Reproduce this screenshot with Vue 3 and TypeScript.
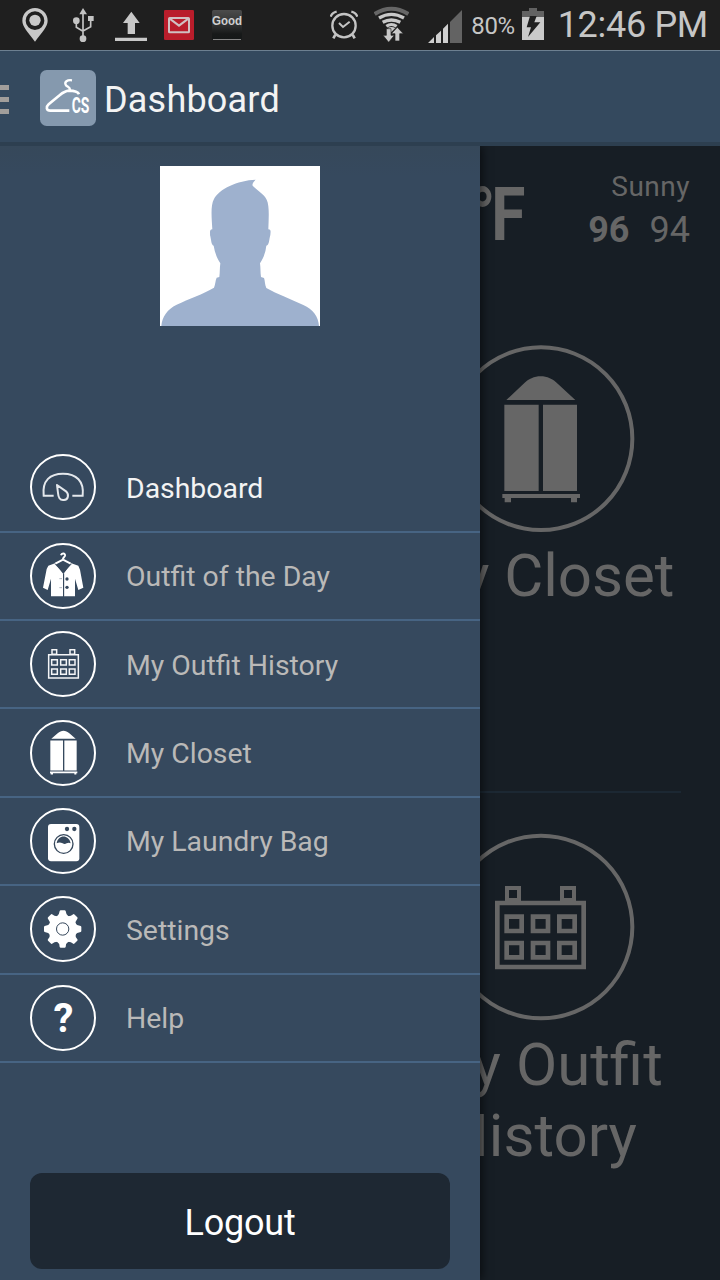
<script setup lang="ts">
import { ref } from 'vue'

type IconName = 'gauge' | 'jacket' | 'calendar' | 'closet' | 'washer' | 'gear' | 'help'

interface MenuItem {
  icon: IconName
  label: string
}

const items: MenuItem[] = [
  { icon: 'gauge', label: 'Dashboard' },
  { icon: 'jacket', label: 'Outfit of the Day' },
  { icon: 'calendar', label: 'My Outfit History' },
  { icon: 'closet', label: 'My Closet' },
  { icon: 'washer', label: 'My Laundry Bag' },
  { icon: 'gear', label: 'Settings' },
  { icon: 'help', label: 'Help' },
]

const active = ref<IconName>('gauge')
const teeth: number[] = [0, 45, 90, 135, 180, 225, 270, 315]
</script>

<template>
  <div class="screen">
    <header class="status">
      <svg class="pin" viewBox="66 18 78 108" width="26" height="36">
        <path fill-rule="evenodd" fill="#c8c8c8" d="M105 24C84 24 67 41 67 62C67 80 84 96 105 125C126 96 143 80 143 62C143 41 126 24 105 24ZM105 34A28 28 0 1 1 105 90A28 28 0 1 1 105 34Z" />
        <circle cx="105" cy="61" r="17" fill="#c8c8c8" />
      </svg>
      <svg class="usb" viewBox="216 18 66 108" width="22" height="36">
        <path d="M249 38V116M229 64V82L249 94M272 58V80L249 93" fill="none" stroke="#c4c4c4" stroke-width="5" />
        <path d="M249 24L261 43H238Z" fill="#c4c4c4" />
        <circle cx="229" cy="62" r="10" fill="#c4c4c4" />
        <rect x="264" y="48" width="17" height="15" fill="#c4c4c4" />
        <circle cx="249" cy="116" r="10" fill="#c4c4c4" />
      </svg>
      <svg class="upload" viewBox="345 18 96 108" width="32" height="36">
        <path d="M394 35L419 69H405V102H383V69H369ZM345 113H441V123H345Z" fill="#c8c8c8" />
      </svg>
      <svg class="mail" viewBox="492 18 90 108" width="30" height="36">
        <rect x="492" y="30" width="90" height="90" rx="4" fill="#b91d2b" />
        <rect x="507" y="54" width="60" height="43" rx="2" fill="none" stroke="#d0c0c2" stroke-width="6" />
        <path d="M509 56L537 77L565 56" fill="none" stroke="#d0c0c2" stroke-width="6" />
      </svg>
      <svg class="good" viewBox="630 18 102 108" width="34" height="36">
        <defs>
          <linearGradient id="tile" x1="0" y1="0" x2="0" y2="1">
            <stop offset="0" stop-color="#4c4c4c" />
            <stop offset="0.55" stop-color="#2c2d2d" />
            <stop offset="0.8" stop-color="#171919" />
            <stop offset="1" stop-color="#151818" />
          </linearGradient>
        </defs>
        <rect x="636" y="30" width="90" height="90" rx="5" fill="url(#tile)" />
        <path d="M639 118.5H723" stroke="#858585" stroke-width="3" />
        <text x="636" y="75" class="good-text" textLength="90" lengthAdjust="spacingAndGlyphs">Good</text>
      </svg>
      <svg class="alarm" viewBox="60 18 84 108" width="28" height="36">
        <circle cx="102" cy="77" r="35" fill="none" stroke="#c4c4c4" stroke-width="7" />
        <path d="M87 69L99 81L119 65" fill="none" stroke="#c4c4c4" stroke-width="6" />
        <path d="M62 50Q66 38 80 35M142 50Q138 38 124 35" fill="none" stroke="#c4c4c4" stroke-width="7" />
        <path d="M76 104L70 115M128 104L134 115" stroke="#c4c4c4" stroke-width="8" />
      </svg>
      <svg class="wifi" viewBox="192 18 105 108" width="35" height="36">
        <path d="M194 42Q244 10 295 42" fill="none" stroke="#666" stroke-width="12" />
        <path d="M207 54Q244 32 282 54M218 67Q244 53 271 67" fill="none" stroke="#c8c8c8" stroke-width="10" />
        <path d="M229 79Q244 68 260 79" fill="none" stroke="#c8c8c8" stroke-width="9" />
        <path d="M233 84Q244 78 256 84L244 96Z" fill="#c8c8c8" />
        <path d="M262 82L280 101H269V123H255V101H244ZM229 86H243V106H253L236 127L219 106H229Z" fill="#c8c8c8" stroke="#1f1f1f" stroke-width="2" />
      </svg>
      <svg class="signal" viewBox="354 18 102 108" width="34" height="36" overflow="visible">
        <path d="M420 66L456 30V129H420Z" fill="#636363" />
        <path d="M354 129L372 111V129ZM378 129V106L393 92V129ZM399 129V86L414 71V129Z" fill="#cfcfcf" />
      </svg>
      <span class="percent">80%</span>
      <svg class="battery" viewBox="636 18 66 108" width="22" height="36">
        <path d="M657 24H681V33H702V51H636V33H657Z" fill="#626262" />
        <path d="M636 51H702V120H636Z" fill="#cacaca" />
        <path d="M660 48H680L673 67H691L654 111L663 82H650Z" fill="#1f1f1f" />
      </svg>
      <time class="clock">12:46 PM</time>
    </header>

    <div class="actionbar">
      <div class="burger"><i /><i /><i /></div>
      <svg class="logo" viewBox="120 210 168 168" width="56" height="56">
        <rect x="120" y="210" width="168" height="168" rx="20" fill="#8599ae" />
        <path d="M216 241C201 239 193 246 197 254C201 262 211 260 210 270" fill="none" stroke="#fff" stroke-width="7" />
        <path d="M237 283C233 273 220 272 207 272C193 273 187 279 176 288L146 313C137 321 139 332 151 332H208" fill="none" stroke="#fff" stroke-width="8" />
        <text x="215" y="338" class="logo-text" textLength="53" lengthAdjust="spacingAndGlyphs">CS</text>
      </svg>
      <h1>Dashboard</h1>
    </div>

    <div class="stage">
      <main class="page">
        <section class="weather">
          <strong class="unit"><span class="degree">°</span>F</strong>
          <div class="forecast">
            <span>Sunny</span>
            <div class="range"><b>96</b><span>94</span></div>
          </div>
        </section>
        <section class="tile first">
          <svg viewBox="-69 44 564 564" width="188" height="188">
            <circle cx="213" cy="325" r="274" fill="none" stroke="#666" stroke-width="12" />
            <path fill="#666" d="M109 209L160 161C190 130 234 130 264 161L316 209ZM103 223H206V482H103ZM219 223H321V482H219ZM97 491H330V503H321V516H303V503H123V516H104V503H97Z" />
          </svg>
          <h2>My Closet</h2>
        </section>
        <section class="tile second">
          <svg viewBox="-69 160 564 564" width="188" height="188">
            <circle cx="213" cy="442" r="274" fill="none" stroke="#666" stroke-width="12" />
            <g fill="none" stroke="#666" stroke-width="14">
              <path d="M82 370H341V562H82Z" />
              <path d="M111 325H147V361H111ZM276 325H312V361H276Z" stroke-width="12" />
              <path d="M110 411H155V454H110ZM189 411H234V454H189ZM268 411H314V454H268ZM110 490H155V533H110ZM189 490H234V533H189ZM268 490H314V533H268Z" />
            </g>
          </svg>
          <h2>My Outfit<br />History</h2>
        </section>
      </main>

      <aside class="drawer">
        <svg class="avatar" viewBox="0 0 480 480" width="160" height="160">
          <rect width="480" height="480" fill="#fff" />
          <path fill="#9eb1ce" d="M4 480C6 452 22 430 50 416C86 399 130 384 162 365C166 356 166 343 170 335L178 333C180 319 179 306 181 292C170 276 164 257 161 239C153 237 154 220 150 207C151 202 147 190 157 190C155 157 151 118 162 99C177 69 232 43 287 41C279 48 276 55 278 59C291 73 312 84 320 101C329 119 326 158 325 190C335 190 331 201 331 207C327 221 328 238 319 239C317 257 311 276 300 292C302 306 301 319 303 333L312 336C315 343 314 355 319 366C352 384 392 400 430 417C459 430 475 451 477 480Z" />
        </svg>

        <nav class="menu">
          <a v-for="item in items" :key="item.icon" :class="['row', { on: item.icon === active }]" @click="active = item.icon">
            <span class="badge">
              <svg v-if="item.icon === 'gauge'" viewBox="90 43 198 198">
                <path d="M161 168H131C126 122 151 102 189 102C229 102 253 125 248 168H217" fill="none" stroke="#e4e8ec" stroke-width="6" />
                <path d="M171 136L198 155C208 164 205 180 192 181C179 183 175 172 174 160Z" fill="none" stroke="#e4e8ec" stroke-width="6" stroke-linejoin="round" />
              </svg>
              <svg v-else-if="item.icon === 'jacket'" viewBox="90 309 198 198">
                <path d="M183 346C185 338 196 339 195 347C194 352 188 352 189 358" fill="none" stroke="#fff" stroke-width="6" />
                <path fill="#fff" d="M165 370L190 402L214 370L235 377L240 389L250 443L235 450L225 416V469H192V402H189V469H153V416L143 450L129 443L140 387L145 377Z" />
                <path d="M164 372H215L190 399Z" fill="#36485c" />
                <path d="M189 359L166 371M189 359L212 371" fill="none" stroke="#fff" stroke-width="6" />
                <path d="M191 400V469" stroke="#36485c" stroke-width="3" />
                <path d="M178 416H186M178 443H186" stroke="#8793a0" stroke-width="2" />
                <circle cx="201" cy="417" r="5" fill="#36485c" />
                <circle cx="201" cy="442" r="5" fill="#36485c" />
              </svg>
              <svg v-else-if="item.icon === 'calendar'" viewBox="90 33 198 198">
                <g fill="none" stroke="#f4f5f7" stroke-width="4.5">
                  <path d="M146 104H235V174H146Z" />
                  <path d="M156 89H170V103H156ZM210 89H224V103H210Z" />
                  <path d="M155 119H172V135H155ZM182 119H199V135H182ZM208 119H225V135H208ZM155 147H172V163H155ZM182 147H199V163H182ZM208 147H225V163H208Z" />
                </g>
              </svg>
              <svg v-else-if="item.icon === 'closet'" viewBox="90 298.5 198 198">
                <path fill="#fff" d="M154 355L173 338C184 328 197 328 208 338L227 355ZM151 360H189V450H151ZM193 360H230V450H193ZM150 453H232V458H229V462H223V458H159V462H152V458H150Z" />
              </svg>
              <svg v-else-if="item.icon === 'washer'" viewBox="90 24 198 198">
                <rect x="144" y="72" width="94" height="112" rx="9" fill="#fff" />
                <circle cx="201" cy="87" r="6.5" fill="#36485c" />
                <circle cx="223" cy="87" r="6.5" fill="#36485c" />
                <circle cx="191" cy="132" r="28" fill="none" stroke="#36485c" stroke-width="4" />
                <path d="M170 130C174 103 207 103 212 130C202 124 198 136 188 130C181 127 176 127 170 130Z" fill="#36485c" />
              </svg>
              <svg v-else-if="item.icon === 'gear'" viewBox="90 289.5 198 198">
                <g fill="#fff" transform="translate(188 388.5)">
                  <circle r="42" />
                  <path v-for="angle in teeth" :key="angle" :transform="`rotate(${angle})`" d="M-18 -37Q-10 -42 -9 -54Q-8 -56 -6 -56H6Q8 -56 9 -54Q10 -42 18 -37Z" />
                  <circle r="18.5" fill="none" stroke="#36485c" stroke-width="3" />
                </g>
              </svg>
              <svg v-else viewBox="90 557 198 198">
                <text x="190" y="699" text-anchor="middle" class="question">?</text>
              </svg>
            </span>
            <span class="label">{{ item.label }}</span>
          </a>
        </nav>

        <button class="logout">Logout</button>
      </aside>
    </div>
  </div>
</template>

<style scoped>
.screen {
  width: 720px;
  height: 1280px;
  overflow: hidden;
  display: flex;
  flex-direction: column;
  background: #171e25;
  font-family: Roboto, "Noto Sans", sans-serif;
}
svg { display: block; flex: none; }

.status {
  box-sizing: border-box;
  height: 50px;
  flex: none;
  display: flex;
  align-items: flex-start;
  padding: 6px 12px 0 22px;
  background: #1f1f1f;
  color: #c6c6c6;
}
.usb { margin-left: 24px; }
.upload { margin-left: 21px; }
.mail { margin-left: 17px; }
.good { margin-left: 16px; }
.alarm { margin-left: 86px; }
.wifi { margin-left: 16px; }
.signal { margin-left: 19px; }
.percent {
  width: 60px;
  padding-top: 6px;
  text-align: center;
  font-size: 24px;
  line-height: 28px;
  letter-spacing: -0.4px;
  text-indent: 2px;
}
.clock {
  margin-left: auto;
  font-size: 36px;
  line-height: 42px;
  letter-spacing: -0.3px;
  margin-top: -2px;
  white-space: nowrap;
}
.good-text { font: bold 38px "Liberation Sans", sans-serif; fill: #d0d0d0; }
.logo-text { font: bold 66px Roboto, sans-serif; fill: #fff; }
.question { font: bold 120px Roboto, sans-serif; fill: #fff; }

.actionbar {
  position: relative;
  z-index: 1;
  box-sizing: border-box;
  height: 96px;
  flex: none;
  display: flex;
  align-items: center;
  border-top: 1px solid #6d8091;
  border-bottom: 4px solid #2d3f50;
  background: #34495e;
}
.burger { display: flex; flex-direction: column; gap: 7px; width: 9px; margin-top: 6px; }
.burger i { height: 5px; background: #a19e9b; }
.logo { margin: 3px 0 0 31px; }
h1 {
  margin: 7px 0 0 8px;
  font-size: 36px;
  line-height: 42px;
  font-weight: 400;
  letter-spacing: 0.2px;
  color: #f3f3f3;
}

.stage { position: relative; flex: 1; min-height: 0; display: flex; }
.page {
  width: 360px;
  margin-left: auto;
  color: #666;
  display: flex;
  flex-direction: column;
}
.weather {
  box-sizing: border-box;
  height: 198px;
  flex: none;
  display: flex;
  justify-content: space-between;
  padding: 25px 30px 0 107px;
}
.unit {
  display: flex;
  font-size: 74px;
  line-height: 86px;
  margin-top: 1px;
  transform: scaleX(0.84);
  transform-origin: left;
}
.degree {
  transform: translate(4px, 2px) scale(1.08);
  transform-origin: 50% 30%;
}
.forecast { display: flex; flex-direction: column; align-items: flex-end; font-size: 28px; line-height: 32px; letter-spacing: 0.5px; }
.range { display: flex; gap: 20px; font-size: 36px; line-height: 42px; letter-spacing: 0; margin-top: 6px; }
.tile { display: flex; flex-direction: column; align-items: center; flex: none; padding-left: 1px; }
.first { box-sizing: border-box; height: 449px; padding-top: 1px; }
.first::after {
  content: "";
  width: 280px;
  height: 2px;
  margin-top: auto;
  background: #1c2833;
}
.second { padding-top: 40px; }
h2 {
  margin: 7px 0 0 2px;
  font-size: 60px;
  line-height: 71px;
  font-weight: 400;
  text-align: center;
}
.second h2 { margin-top: 8px; }

.drawer {
  position: absolute;
  inset: 0 auto 0 0;
  box-sizing: border-box;
  width: 480px;
  display: flex;
  flex-direction: column;
  align-items: center;
  padding-top: 20px;
  background: linear-gradient(#36485a, #36495e 30px);
  box-shadow: 2px 0 9px rgba(0, 0, 0, 0.6);
}
.menu { width: 480px; margin-top: 118.2px; }
.row {
  box-sizing: border-box;
  height: 88.4px;
  display: flex;
  align-items: center;
  gap: 30px;
  padding-left: 30px;
  border-bottom: 2px solid #476483;
  color: #bab9b8;
  font-size: 28.4px;
  cursor: pointer;
}
.row.on { color: #f3f3f3; }
.badge {
  box-sizing: border-box;
  width: 66px;
  height: 66px;
  border: 2px solid #fff;
  border-radius: 50%;
}
.badge svg { width: 66px; height: 66px; margin: -2px; }
.label { line-height: 34px; padding-top: 3px; }
.logout {
  width: 420px;
  height: 96px;
  margin-top: 110.4px;
  padding: 3px 0 0;
  border: 0;
  border-radius: 12px;
  background: #1e2833;
  color: #fff;
  font: 400 36px/42px Roboto, sans-serif;
  letter-spacing: -0.2px;
}
</style>

<style>
body { margin: 0; background: #171e25; }
</style>
